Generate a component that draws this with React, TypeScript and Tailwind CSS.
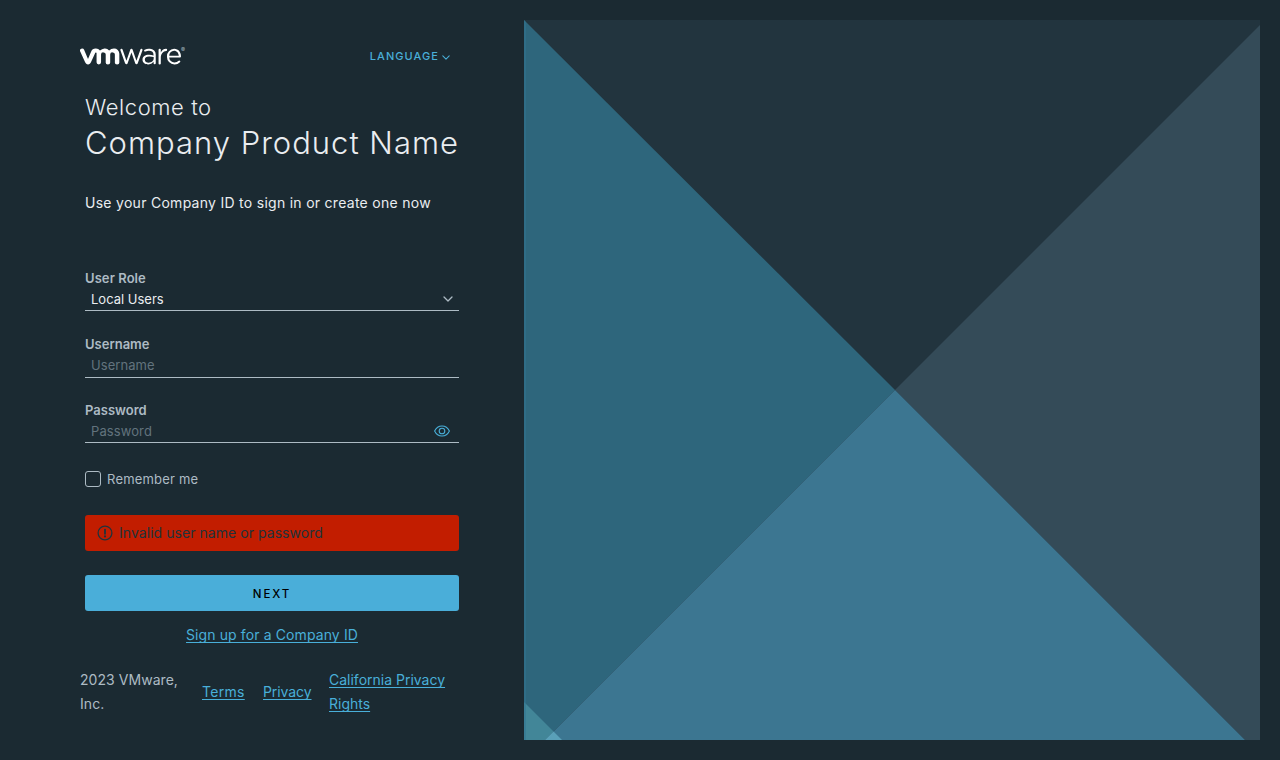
import { SiVmware } from "react-icons/si";

const link =
  "text-[#49afd9] underline decoration-1 underline-offset-2 [text-decoration-skip-ink:none]";

function Chevron({ className }: { className: string }) {
  return (
    <svg className={className} viewBox="0 0 10 6" fill="none" stroke="currentColor" strokeWidth="1.3" strokeLinecap="round" strokeLinejoin="round">
      <path d="M1 1l4 4 4-4" />
    </svg>
  );
}

function Logo() {
  return (
    <div className="flex h-5 items-start text-white">
      <div className="flex h-5 w-[101px] items-center justify-center overflow-hidden">
        <SiVmware className="size-[101px] shrink-0" />
      </div>
      <span className="mt-px text-[6px] leading-none text-[#adbbc4]">®</span>
    </div>
  );
}

function Illustration() {
  return (
    <svg className="h-[720px] w-[736px]" viewBox="0 0 736 720">
      <rect width="736" height="720" fill="#22343e" />
      <path d="M736 5L371 370l350 350h15z" fill="#344b58" />
      <path d="M0 0l371 370L21 720H0z" fill="#2e667c" />
      <path d="M371 370l350 350H21z" fill="#3c7691" />
      <path d="M0 682l29.5 29.5L21 720H0z" fill="#428698" />
      <path d="M29.5 711.5L38 720H21z" fill="#5aa0b8" />
      <path d="M0 0l2 2v718H0z" fill="#2f7391" fillOpacity="0.5" />
    </svg>
  );
}

export default function App() {
  return (
    <div className="flex h-[760px] w-[1280px] overflow-hidden bg-[#1b2a32] font-['Inter','Liberation_Sans',sans-serif] font-[380]">
      <main className="flex w-[524px] flex-col pt-[46px]">
        <header className="flex h-5 items-center justify-between pr-[74px] pl-20">
          <Logo />
          <button className="flex items-center gap-[3px] text-[11px] font-[450] tracking-[1.05px] text-[#49afd9]">
            LANGUAGE
            <Chevron className="mt-[2px] h-[5px] w-2" />
          </button>
        </header>
        <form className="ml-[85px] flex w-[374px] flex-col">
          <h1 className="mt-6 flex flex-col font-light text-[#eaedf0]">
            <span className="-mt-px h-9 text-[22px] leading-[36px] tracking-[0.58px]">Welcome to</span>
            <span className="h-[37px] text-[31px] leading-[35px] tracking-[1px] whitespace-nowrap">Company Product Name</span>
          </h1>
          <p className="mt-[29px] h-6 text-[14px] leading-6 tracking-[0.28px] whitespace-nowrap text-[#eaedf0]">
            Use your Company ID to sign in or create one now
          </p>
          <label className="mt-[51px] h-6 text-[13px] leading-6 font-semibold tracking-[0.08px] text-[#adbbc4]">User Role</label>
          <div className="-mt-px flex h-[22px] items-center justify-between border-b border-[#adbbc4] pr-[6px] pl-[6px] text-[13px] text-[#eaedf0]">
            Local Users
            <Chevron className="-mt-px h-[6px] w-[10px] text-[#adbbc4]" />
          </div>
          <label className="mt-[21px] h-6 text-[13px] leading-6 font-semibold text-[#adbbc4]">Username</label>
          <input className="-mt-px h-[23px] border-b border-[#adbbc4] bg-transparent px-[6px] pb-[3px] text-[13px] tracking-[0.05px] outline-none placeholder:text-[#62737d]" placeholder="Username" />
          <label className="mt-5 h-6 text-[13px] leading-6 font-semibold text-[#adbbc4]">Password</label>
          <div className="-mt-px flex h-[22px] items-center border-b border-[#adbbc4] pr-[9px] pl-[6px]">
            <input className="h-5 min-w-0 grow bg-transparent pb-px text-[13px] tracking-[0.1px] outline-none placeholder:text-[#62737d]" placeholder="Password" />
            <svg className="-mt-px h-3 w-4 text-[#49afd9]" viewBox="0 0 16 12" fill="none" stroke="currentColor" strokeWidth="1.1">
              <path d="M.6 6C2 3.100 4.700 1 8 1s6 2.100 7.400 5C14 8.900 11.300 11 8 11S2 8.900.6 6z" />
              <circle cx="8" cy="6" r="2.800" />
            </svg>
          </div>
          <label className="mt-6 flex h-6 items-center gap-[6px] text-[13px] tracking-[0.2px] text-[#adbbc4]">
            <span className="size-4 rounded-[3px] border border-[#adbbc4]" />
            <span className="pt-[2px]">Remember me</span>
          </label>
          <div className="mt-6 flex h-9 items-center gap-[6px] rounded-[3px] bg-[#c21d00] pl-3 text-[14px] tracking-[0.05px] text-[#21333b]">
            <svg className="size-4" viewBox="0 0 16 16" fill="none" stroke="currentColor" strokeWidth="1.3">
              <circle cx="8" cy="8" r="6.900" />
              <path d="M8 4.600v4.200" strokeWidth="1.800" strokeLinecap="round" />
              <circle cx="8" cy="11.400" r="1.100" fill="currentColor" stroke="none" />
            </svg>
            <span className="-mt-px">Invalid user name or password</span>
          </div>
          <button className="mt-6 h-9 rounded-[3px] bg-[#4aaed9] pt-[3px] text-[11.5px] font-medium tracking-[1.9px] text-black">NEXT</button>
          <a className={`mt-3 self-center text-[14px] leading-6 tracking-[0.11px] ${link}`}>Sign up for a Company ID</a>
        </form>
        <footer className="mt-[21px] ml-20 flex h-12 items-center text-[14px] leading-6 text-[#adbbc4]">
          <span className="w-[122px] tracking-[0.05px]">2023 VMware,<br />Inc.</span>
          <a className="w-[61px]"><span className={`tracking-[0.3px] ${link}`}>Terms</span></a>
          <a className={`w-[66px] tracking-[-0.08px] ${link}`}>Privacy</a>
          <a className={link}>California Privacy<br />Rights</a>
        </footer>
      </main>
      <aside className="pt-5">
        <Illustration />
      </aside>
    </div>
  );
}
